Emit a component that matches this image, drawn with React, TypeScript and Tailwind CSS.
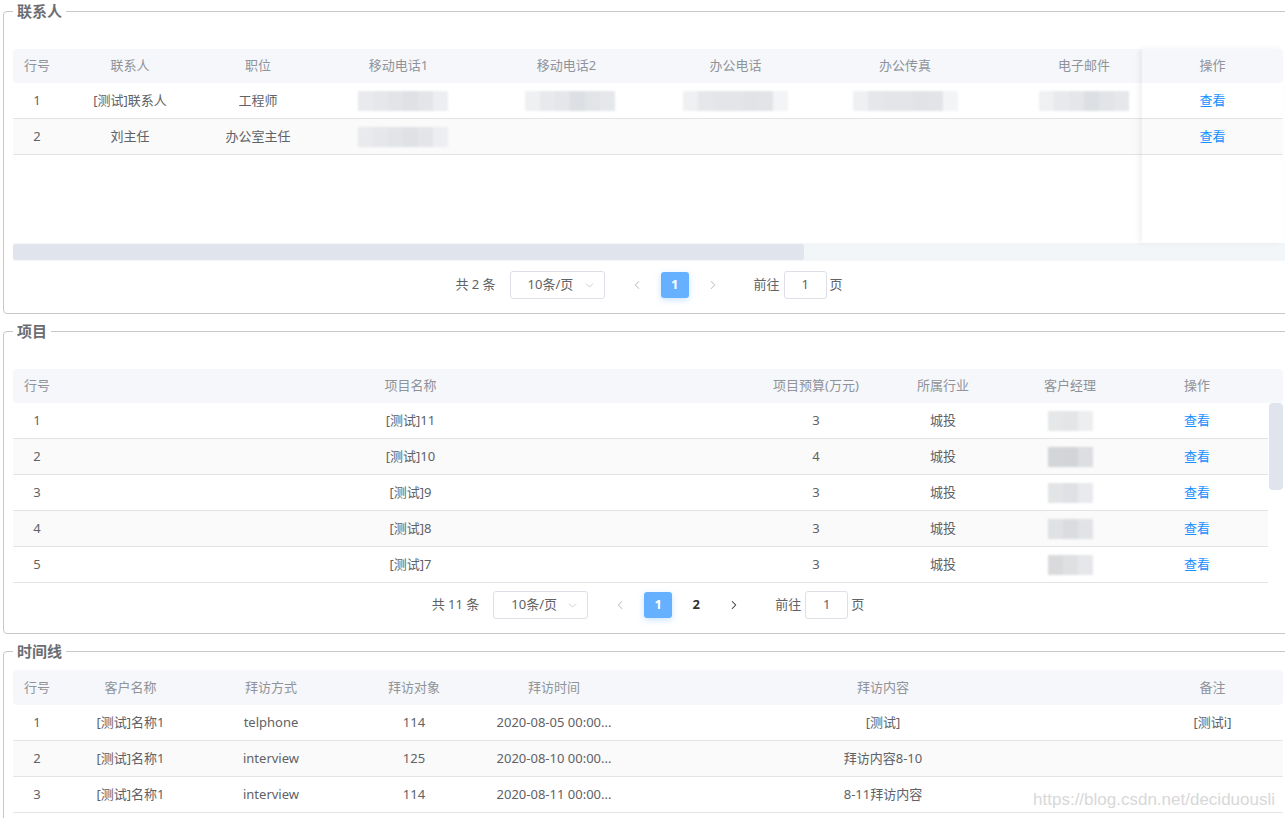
import React from 'react'
import { ChevronLeft, ChevronRight, ChevronDown } from 'lucide-react'

type Col = { t: string; w: string }

const contactCols: Col[] = [
  { t: '行号', w: 'w-[48px]' },
  { t: '联系人', w: 'w-[138px]' },
  { t: '职位', w: 'w-[118px]' },
  { t: '移动电话1', w: 'w-[163px]' },
  { t: '移动电话2', w: 'w-[173px]' },
  { t: '办公电话', w: 'w-[165px]' },
  { t: '办公传真', w: 'w-[174px]' },
  { t: '电子邮件', w: 'w-[184px]' },
]

const projectCols: Col[] = [
  { t: '行号', w: 'w-[48px]' },
  { t: '项目名称', w: 'w-[699px]' },
  { t: '项目预算(万元)', w: 'w-[112px]' },
  { t: '所属行业', w: 'w-[142px]' },
  { t: '客户经理', w: 'w-[112px]' },
  { t: '操作', w: 'w-[142px]' },
]

const timelineCols: Col[] = [
  { t: '行号', w: 'w-[48px]' },
  { t: '客户名称', w: 'w-[139px]' },
  { t: '拜访方式', w: 'w-[142px]' },
  { t: '拜访对象', w: 'w-[144px]' },
  { t: '拜访时间', w: 'w-[136px]' },
  { t: '拜访内容', w: 'w-[522px]' },
  { t: '备注', w: 'w-[137px]' },
]

const projects = [
  ['1', '[测试]11', '3', '城投'],
  ['2', '[测试]10', '4', '城投'],
  ['3', '[测试]9', '3', '城投'],
  ['4', '[测试]8', '3', '城投'],
  ['5', '[测试]7', '3', '城投'],
]

const visits = [
  ['1', '[测试]名称1', 'telphone', '114', '2020-08-05 00:00...', '[测试]', '[测试i]'],
  ['2', '[测试]名称1', 'interview', '125', '2020-08-10 00:00...', '拜访内容8-10', ''],
  ['3', '[测试]名称1', 'interview', '114', '2020-08-11 00:00...', '8-11拜访内容', ''],
]

// blurred-out private values, drawn as a little mosaic
function Mosaic({ tones, w = 'w-[15px]' }: { tones: string[]; w?: string }) {
  return (
    <div className="flex h-[20px] blur-[1px]">
      {tones.map((c, i) => (
        <div key={i} className={`${w} h-full ${c}`} />
      ))}
    </div>
  )
}

function Legend({ children }: { children: React.ReactNode }) {
  return (
    <legend className="px-1 text-[15px] leading-[22px] font-bold text-[#6b6d72]">{children}</legend>
  )
}

function HeadCell({ c }: { c: Col }) {
  return (
    <div className={`${c.w} shrink-0 flex items-center justify-center text-[13px] text-[#909399]`}>{c.t}</div>
  )
}

function Pager({ total, pages, nextOn }: { total: number; pages: number[]; nextOn: boolean }) {
  return (
    <div className="flex h-[28px] items-center justify-center text-[13px] text-[#606266]">
      <span>共 {total} 条</span>
      <div className="ml-[14px] flex h-[28px] w-[95px] items-center rounded-[3px] border border-[#dcdfe6] pl-[17px] pr-[8px]">
        <span className="flex-1">10条/页</span>
        <ChevronDown size={13} strokeWidth={1.5} className="text-[#c0c4cc]" />
      </div>
      <div className="ml-[18px] flex w-[28px] justify-center text-[#c0c4cc]">
        <ChevronLeft size={14} strokeWidth={1.8} />
      </div>
      {pages.map((p) => (
        <div
          key={p}
          className={
            p === 1
              ? 'ml-[10px] flex h-[26px] w-[28px] items-center justify-center rounded-[3px] bg-[#66b1ff] font-bold text-white shadow-[0_2px_6px_rgba(102,177,255,0.35)]'
              : 'ml-[10px] flex h-[26px] w-[28px] items-center justify-center font-bold text-[#303133]'
          }
        >
          {p}
        </div>
      ))}
      <div className={`ml-[10px] flex w-[28px] justify-center ${nextOn ? 'text-[#303133]' : 'text-[#c0c4cc]'}`}>
        <ChevronRight size={14} strokeWidth={1.8} />
      </div>
      <span className="ml-[27px]">前往</span>
      <div className="ml-[4px] flex h-[28px] w-[43px] items-center justify-center rounded-[3px] border border-[#dcdfe6]">1</div>
      <span className="ml-[3px]">页</span>
    </div>
  )
}

export default function App() {
  const t1 = ['bg-[#e9eaed]', 'bg-[#e6e7ea]', 'bg-[#e2e4e8]', 'bg-[#dfe1e5]', 'bg-[#e4e5e8]', 'bg-[#eceef1]']
  const t2 = ['bg-[#eef0f2]', 'bg-[#e7e9ec]', 'bg-[#e4e6e9]', 'bg-[#dcdfe3]', 'bg-[#e2e4e7]', 'bg-[#e5e7ea]']
  const t3 = ['bg-[#eef0f2]', 'bg-[#e5e7ea]', 'bg-[#e3e5e8]', 'bg-[#e3e5e8]', 'bg-[#e1e3e6]', 'bg-[#e3e4e7]', 'bg-[#f3f4f6]']
  const mgr = [
    ['bg-[#e6e7e9]', 'bg-[#e3e5e7]', 'bg-[#eceef0]'],
    ['bg-[#d3d5d8]', 'bg-[#d2d4d7]', 'bg-[#dcdee1]'],
    ['bg-[#e3e4e6]', 'bg-[#dfe1e4]', 'bg-[#e8eaed]'],
    ['bg-[#e0e1e3]', 'bg-[#dadcdf]', 'bg-[#e1e3e6]'],
    ['bg-[#d9dadc]', 'bg-[#dfe0e2]', 'bg-[#e5e7ea]'],
  ]

  return (
    <div className="relative h-[818px] w-[1285px] overflow-hidden bg-white font-['Noto_Sans','Noto_Sans_CJK_SC',sans-serif] text-[13px] text-[#606266]">
      {/* 联系人 */}
      <fieldset className="ml-[3px] w-[1290px] rounded-[4px] border border-[#c8c8c8] px-[9px] pb-[14px]">
        <Legend>联系人</Legend>
        <div className="mt-[27px] flex w-[1270px]">
          <div className="w-[1129px] overflow-hidden">
            <div className="w-[2045px]">
              <div className="flex h-[34px] rounded-l-[4px] bg-[#f5f7fa]">
                {contactCols.map((c) => (
                  <HeadCell key={c.t} c={c} />
                ))}
              </div>
              <div className="h-[160px]">
                <div className="flex h-[36px] border-b border-[#e2e4e8]">
                  <div className="flex w-[48px] shrink-0 items-center justify-center">1</div>
                  <div className="flex w-[138px] shrink-0 items-center justify-center">[测试]联系人</div>
                  <div className="flex w-[118px] shrink-0 items-center justify-center">工程师</div>
                  <div className="flex w-[163px] shrink-0 items-center justify-center pl-[8px]"><Mosaic tones={t1} /></div>
                  <div className="flex w-[173px] shrink-0 items-center justify-center pl-[6px]"><Mosaic tones={t2} /></div>
                  <div className="flex w-[165px] shrink-0 items-center justify-center"><Mosaic tones={t3} /></div>
                  <div className="flex w-[174px] shrink-0 items-center justify-center"><Mosaic tones={t3} /></div>
                  <div className="flex w-[184px] shrink-0 items-center justify-center"><Mosaic tones={t2} /></div>
                </div>
                <div className="flex h-[36px] border-b border-[#e2e4e8] bg-[#fafafa]">
                  <div className="flex w-[48px] shrink-0 items-center justify-center">2</div>
                  <div className="flex w-[138px] shrink-0 items-center justify-center">刘主任</div>
                  <div className="flex w-[118px] shrink-0 items-center justify-center">办公室主任</div>
                  <div className="flex w-[163px] shrink-0 items-center justify-center pl-[8px]"><Mosaic tones={t1} /></div>
                </div>
              </div>
            </div>
          </div>
          <div className="relative z-10 w-[141px] bg-white shadow-[-3px_0_6px_rgba(0,0,0,0.06)]">
            <div className="flex h-[34px] items-center justify-center rounded-r-[4px] bg-[#f5f7fa] text-[#909399]">操作</div>
            <div className="flex h-[36px] items-center justify-center border-b border-[#e2e4e8] text-[#1890ff]">查看</div>
            <div className="flex h-[36px] items-center justify-center border-b border-[#e2e4e8] bg-[#fafafa] text-[#1890ff]">查看</div>
            <div className="h-[88px]" />
          </div>
        </div>
        <div className="h-[18px] w-[1272px] bg-[#f3f6f9] py-[1px]">
          <div className="h-full w-[791px] rounded-[3px] bg-[#dfe4ed]" />
        </div>
        <div className="mt-[10px]">
          <Pager total={2} pages={[1]} nextOn={false} />
        </div>
      </fieldset>

      {/* 项目 */}
      <fieldset className="ml-[3px] mt-[6px] w-[1290px] rounded-[4px] border border-[#c8c8c8] px-[9px] pb-[14px]">
        <Legend>项目</Legend>
        <div className="mt-[27px] w-[1270px]">
          <div className="flex h-[34px] rounded-[4px] bg-[#f5f7fa]">
            {projectCols.map((c) => (
              <HeadCell key={c.t} c={c} />
            ))}
          </div>
          <div className="flex h-[180px]">
            <div className="w-[1255px] overflow-hidden">
              {projects.map((r, i) => (
                <div key={r[0]} className={`flex h-[36px] border-b border-[#e2e4e8] ${i % 2 === 1 ? 'bg-[#fafafa]' : ''}`}>
                  <div className="flex w-[48px] shrink-0 items-center justify-center">{r[0]}</div>
                  <div className="flex w-[699px] shrink-0 items-center justify-center">{r[1]}</div>
                  <div className="flex w-[112px] shrink-0 items-center justify-center">{r[2]}</div>
                  <div className="flex w-[142px] shrink-0 items-center justify-center">{r[3]}</div>
                  <div className="flex w-[112px] shrink-0 items-center justify-center">
                    <Mosaic tones={mgr[i]} />
                  </div>
                  <div className="flex w-[142px] shrink-0 items-center justify-center text-[#1890ff]">查看</div>
                </div>
              ))}
            </div>
            <div className="w-[15px] pl-[1px]">
              <div className="h-[87px] w-[14px] rounded-[4px] bg-[#dfe4ed]" />
            </div>
          </div>
        </div>
        <div className="mt-[8px]">
          <Pager total={11} pages={[1, 2]} nextOn={true} />
        </div>
      </fieldset>

      {/* 时间线 */}
      <fieldset className="ml-[3px] mt-[6px] w-[1290px] rounded-[4px] border border-[#c8c8c8] px-[9px] pb-[14px]">
        <Legend>时间线</Legend>
        <div className="mt-[8px] w-[1270px]">
          <div className="flex h-[35px] rounded-[4px] bg-[#f5f7fa]">
            {timelineCols.map((c) => (
              <HeadCell key={c.t} c={c} />
            ))}
          </div>
          {visits.map((r, i) => (
            <div key={r[0]} className={`flex h-[36px] border-b border-[#e2e4e8] ${i % 2 === 1 ? 'bg-[#fafafa]' : ''}`}>
              {timelineCols.map((c, j) => (
                <div key={c.t} className={`${c.w} flex shrink-0 items-center justify-center whitespace-nowrap`}>
                  {r[j]}
                </div>
              ))}
            </div>
          ))}
        </div>
      </fieldset>

      <div className="absolute right-[10px] top-[787px] font-['Liberation_Sans',sans-serif] text-[17px] text-[#d8d8d8]">
        https://blog.csdn.net/deciduousli
      </div>
    </div>
  )
}
